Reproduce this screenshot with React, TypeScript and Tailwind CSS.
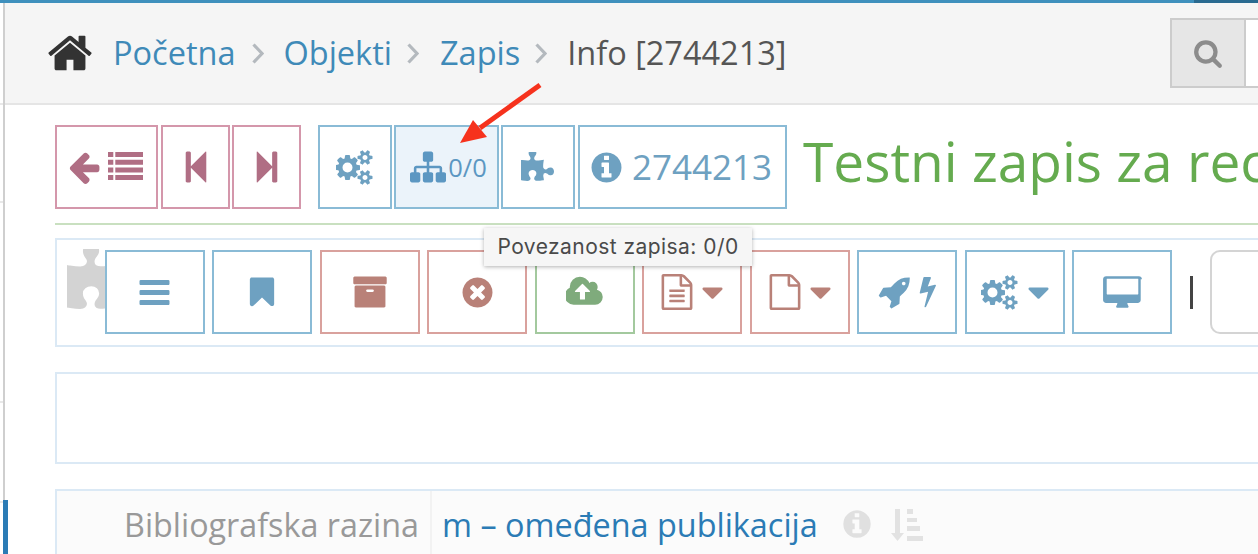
import React from "react";

const P = {
  home: "M1472 992v480q0 26-19 45t-45 19h-384v-384h-256v384h-384q-26 0-45-19t-19-45v-480q0-1 .5-3t.5-3l575-474 575 474q1 2 1 6zm223-69l-62 74q-8 9-21 11h-3q-13 0-21-7l-692-577-692 577q-12 8-24 7-13-2-21-11l-62-74q-8-10-7-23.5t11-21.5l719-599q32-26 76-26t76 26l244 204v-195q0-14 9-23t23-9h192q14 0 23 9t9 23v408l219 182q10 8 11 21.5t-7 23.5z",
  cogs: "M832 896q0-106-75-181t-181-75-181 75-75 181 75 181 181 75 181-75 75-181zm768 512q0-52-38-90t-90-38-90 38-38 90q0 53 37.5 90.5t90.5 37.5 90.5-37.5 37.5-90.5zm0-1024q0-52-38-90t-90-38-90 38-38 90q0 53 37.5 90.5t90.5 37.5 90.5-37.5 37.5-90.5zm-384 421v185q0 10-7 19.5t-16 10.5l-155 24q-11 35-32 76 34 48 90 115 7 11 7 20 0 12-7 19-23 30-82.5 89.5t-78.5 59.5q-11 0-21-7l-115-90q-37 19-77 31-11 108-23 155-7 24-30 24h-186q-11 0-20-7.5t-10-17.5l-23-153q-34-10-75-31l-118 89q-7 7-20 7-11 0-21-8-144-133-144-160 0-9 7-19 10-14 41-53t47-61q-23-44-35-82l-152-24q-10-1-17-9.5t-7-19.5v-185q0-10 7-19.5t16-10.5l155-24q11-35 32-76-34-48-90-115-7-11-7-20 0-12 7-20 22-30 82-89t79-59q11 0 21 7l115 90q34-18 77-32 11-108 23-154 7-24 30-24h186q11 0 20 7.5t10 17.5l23 153q34 10 75 31l118-89q8-7 20-7 11 0 21 8 144 133 144 160 0 8-7 19-12 16-42 54t-45 60q23 48 34 82l152 23q10 2 17 10.5t7 19.5zm640 533v140q0 16-149 31-12 27-30 52 51 113 51 138 0 4-4 7-122 71-124 71-8 0-46-47t-52-68q-20 2-30 2t-30-2q-14 21-52 68t-46 47q-2 0-124-71-4-3-4-7 0-25 51-138-18-25-30-52-149-15-149-31v-140q0-16 149-31 13-29 30-52-51-113-51-138 0-4 4-7 4-2 35-20t59-34 30-16q8 0 46 46.5t52 67.5q20-2 30-2t30 2q51-71 92-112l6-2q4 0 124 70 4 3 4 7 0 25-51 138 17 23 30 52 149 15 149 31zm0-1024v140q0 16-149 31-12 27-30 52 51 113 51 138 0 4-4 7-122 71-124 71-8 0-46-47t-52-68q-20 2-30 2t-30-2q-14 21-52 68t-46 47q-2 0-124-71-4-3-4-7 0-25 51-138-18-25-30-52-149-15-149-31v-140q0-16 149-31 13-29 30-52-51-113-51-138 0-4 4-7 4-2 35-20t59-34 30-16q8 0 46 46.5t52 67.5q20-2 30-2t30 2q51-71 92-112l6-2q4 0 124 70 4 3 4 7 0 25-51 138 17 23 30 52 149 15 149 31z",
  sitemap: "M1792 1248v320q0 40-28 68t-68 28h-320q-40 0-68-28t-28-68v-320q0-40 28-68t68-28h96v-192h-512v192h96q40 0 68 28t28 68v320q0 40-28 68t-68 28h-320q-40 0-68-28t-28-68v-320q0-40 28-68t68-28h96v-192h-512v192h96q40 0 68 28t28 68v320q0 40-28 68t-68 28h-320q-40 0-68-28t-28-68v-320q0-40 28-68t68-28h96v-192q0-52 38-90t90-38h512v-192h-96q-40 0-68-28t-28-68v-320q0-40 28-68t68-28h320q40 0 68 28t28 68v320q0 40-28 68t-68 28h-96v192h512q52 0 90 38t38 90v192h96q40 0 68 28t28 68z",
  puzzle: "M1664 1098q0 81-44.5 135t-123.5 54q-41 0-77.5-17.5t-59-38-56.5-38-71-17.5q-110 0-110 124 0 39 16 115t15 115v5q-22 0-33 1-34 3-97.5 11.5t-115.5 13.5-98 5q-61 0-103-26.5t-42-83.5q0-37 17.5-71t38-56.5 38-59 17.5-77.5q0-79-54-123.5t-135-44.5q-84 0-143 45.5t-59 127.5q0 43 15 83t33.5 64.5 33.5 53 15 50.5q0 45-46 89-37 35-117 35-95 0-245-24-9-2-27.5-4t-27.5-4l-13-2q-1 0-3-1-2 0-2-1v-1024q2 1 17.5 3.5t34 5 21.5 3.5q150 24 245 24 80 0 117-35 46-44 46-89 0-22-15-50.5t-33.5-53-33.5-64.5-15-83q0-82 59-127.5t144-45.5q80 0 134 44.5t54 123.5q0 41-17.5 77.5t-38 59-38 56.5-17.5 71q0 57 42 83.5t103 26.5q64 0 180-15t163-17v2q-1 2-3.5 17.5t-5 34-3.5 21.5q-24 150-24 245 0 80 35 117 44 46 89 46 22 0 50.5-15t53-33.5 64.5-33.5 83-15q82 0 127.5 59t45.5 143z",
  rocket: "M1504 448q0-40-28-68t-68-28-68 28-28 68 28 68 68 28 68-28 28-68zm224-288q0 249-75.5 430.5t-253.5 360.5q-81 80-195 176l-20 379q-2 16-16 26l-384 224q-7 4-16 4-12 0-23-9l-64-64q-13-14-8-32l85-276-281-281-276 85q-3 1-9 1-14 0-23-9l-64-64q-17-19-5-39l224-384q10-14 26-16l379-20q96-114 176-195 188-187 358-258t431-71q14 0 24 9.5t10 22.5z",
  bolt: "M1333 566q18 20 7 44l-540 1157q-13 25-42 25-4 0-14-2-17-5-25.5-19t-4.5-30l197-808-406 101q-4 1-12 1-18 0-31-11-18-15-13-39l201-825q4-14 16-23t28-9h328q19 0 32 12.5t13 29.5q0 8-5 18l-171 463 396-98q8-2 12-2 19 0 34 15z",
  info: "M1152 1376v-160q0-14-9-23t-23-9h-96v-512q0-14-9-23t-23-9h-320q-14 0-23 9t-9 23v160q0 14 9 23t23 9h96v320h-96q-14 0-23 9t-9 23v160q0 14 9 23t23 9h448q14 0 23-9t9-23zm-128-896v-160q0-14-9-23t-23-9h-192q-14 0-23 9t-9 23v160q0 14 9 23t23 9h192q14 0 23-9t9-23zm640 416q0 209-103 385.5t-279.5 279.5-385.5 103-385.5-103-279.5-279.5-103-385.5 103-385.5 279.5-279.5 385.5-103 385.5 103 279.5 279.5 103 385.5z",
  times: "M1277 1122q0-26-19-45l-181-181 181-181q19-19 19-45 0-27-19-46l-90-90q-19-19-46-19-26 0-45 19l-181 181-181-181q-19-19-45-19-27 0-46 19l-90 90q-19 19-19 46 0 26 19 45l181 181-181 181q-19 19-19 45 0 27 19 46l90 90q19 19 46 19 26 0 45-19l181-181 181 181q19 19 45 19 27 0 46-19l90-90q19-19 19-46zm387-226q0 209-103 385.5t-279.5 279.5-385.5 103-385.5-103-279.5-279.5-103-385.5 103-385.5 279.5-279.5 385.5-103 385.5 103 279.5 279.5 103 385.5z",
  cloud: "M1216 864q0-14-9-23l-352-352q-9-9-23-9t-23 9l-351 351q-10 12-10 24 0 14 9 23t23 9h224v352q0 13 9.5 22.5t22.5 9.5h192q13 0 22.5-9.5t9.5-22.5v-352h224q13 0 22.5-9.5t9.5-22.5zm640 288q0 159-112.5 271.5t-271.5 112.5h-1088q-185 0-316.5-131.5t-131.5-316.5q0-130 70-240t188-165q-2-30-2-43 0-212 150-362t362-150q156 0 285.5 87t188.5 231q71-62 166-62 106 0 181 75t75 181q0 76-41 138 130 31 213.5 135.5t83.5 238.5z",
  fileText: "M1596 380q28 28 48 76t20 88v1152q0 40-28 68t-68 28h-1344q-40 0-68-28t-28-68v-1600q0-40 28-68t68-28h896q40 0 88 20t76 48zm-444-244v376h376q-10-29-22-41l-313-313q-12-12-41-22zm384 1528v-1024h-416q-40 0-68-28t-28-68v-416h-768v1536h1280zm-1024-864q0-14 9-23t23-9h704q14 0 23 9t9 23v64q0 14-9 23t-23 9h-704q-14 0-23-9t-9-23v-64zm736 224q14 0 23 9t9 23v64q0 14-9 23t-23 9h-704q-14 0-23-9t-9-23v-64q0-14 9-23t23-9h704zm0 256q14 0 23 9t9 23v64q0 14-9 23t-23 9h-704q-14 0-23-9t-9-23v-64q0-14 9-23t23-9h704z",
  file: "M1596 380q28 28 48 76t20 88v1152q0 40-28 68t-68 28h-1344q-40 0-68-28t-28-68v-1600q0-40 28-68t68-28h896q40 0 88 20t76 48zm-444-244v376h376q-10-29-22-41l-313-313q-12-12-41-22zm384 1528v-1024h-416q-40 0-68-28t-28-68v-416h-768v1536h1280z",
  bookmark: "M1420 128q23 0 44 9 33 13 52.5 41t19.5 62v1289q0 34-19.5 62t-52.5 41q-19 8-44 8-48 0-83-32l-441-424-441 424q-36 33-83 33-23 0-44-9-33-13-52.5-41t-19.5-62v-1289q0-34 19.5-62t52.5-41q21-9 44-9h1048z",
  bars: "M1664 1344v128q0 26-19 45t-45 19h-1408q-26 0-45-19t-19-45v-128q0-26 19-45t45-19h1408q26 0 45 19t19 45zm0-512v128q0 26-19 45t-45 19h-1408q-26 0-45-19t-19-45v-128q0-26 19-45t45-19h1408q26 0 45 19t19 45zm0-512v128q0 26-19 45t-45 19h-1408q-26 0-45-19t-19-45v-128q0-26 19-45t45-19h1408q26 0 45 19t19 45z",
  archive: "M1088 832q0-26-19-45t-45-19h-256q-26 0-45 19t-19 45 19 45 45 19h256q26 0 45-19t19-45zm576-192v960q0 26-19 45t-45 19h-1408q-26 0-45-19t-19-45v-960q0-26 19-45t45-19h1408q26 0 45 19t19 45zm64-448v256q0 26-19 45t-45 19h-1536q-26 0-45-19t-19-45v-256q0-26 19-45t45-19h1536q26 0 45 19t19 45z",
  caret: "M1408 704q0 26-19 45l-448 448q-19 19-45 19t-45-19l-448-448q-19-19-19-45t19-45 45-19h896q26 0 45 19t19 45z",
  arrowLeft: "M1664 896v128q0 53-32.5 90.5t-84.5 37.5h-704l293 294q38 36 38 90t-38 90l-75 76q-37 37-90 37-52 0-91-37l-651-652q-37-37-37-90 0-52 37-91l651-650q38-38 91-38 52 0 90 38l75 74q38 38 38 91t-38 91l-293 293h704q52 0 84.5 37.5t32.5 90.5z",
  stepBack: "M1363 141q19-19 32-13t13 32v1472q0 26-13 32t-32-13l-710-710q-9-9-13-19v678q0 26-19 45t-45 19h-128q-26 0-45-19t-19-45v-1408q0-26 19-45t45-19h128q26 0 45 19t19 45v678q4-10 13-19z",
  stepFwd: "M429 1651q-19 19-32 13t-13-32v-1472q0-26 13-32t32 13l710 710q9 9 13 19v-678q0-26 19-45t45-19h128q26 0 45 19t19 45v1408q0 26-19 45t-45 19h-128q-26 0-45-19t-19-45v-678q-4 10-13 19z",
  search: "M1216 832q0-185-131.5-316.5t-316.5-131.5-316.5 131.5-131.5 316.5 131.5 316.5 316.5 131.5 316.5-131.5 131.5-316.5zm512 832q0 52-38 90t-90 38q-54 0-90-38l-343-342q-179 124-399 124-143 0-273.5-55.5t-225-150-150-225-55.5-273.5 55.5-273.5 150-225 225-150 273.5-55.5 273.5 55.5 225 150 150 225 55.5 273.5q0 220-124 399l343 343q37 37 37 90z",
  desktop: "M1856 992V224q0-13-9.5-22.5T1824 192H224q-13 0-22.5 9.5T192 224v768q0 13 9.5 22.5T224 1024h1600q13 0 22.5-9.5t9.5-22.5zm128-768v1088q0 66-47 113t-113 47h-544q0 37 16 77.5t32 71 16 43.5q0 26-19 45t-45 19H752q-26 0-45-19t-19-45q0-14 16-44t32-70 16-78H160q-66 0-113-47t-47-113V224q0-66 47-113t113-47h1728q66 0 113 47t47 113z",
};

function Icon({ d, className, box = "0 0 1792 1792" }: { d: string; className: string; box?: string }) {
  return (
    <svg viewBox={box} className={className} fill="currentColor" aria-hidden="true">
      <path d={d} />
    </svg>
  );
}

function Btn({ className, children }: { className: string; children: React.ReactNode }) {
  return (
    <div className={`flex shrink-0 items-center justify-center border-2 bg-white ${className}`}>{children}</div>
  );
}

const pink = "h-[84px] border-[#d497ab] text-[#b06e84]";
const blueTop = "h-[84px] border-[#8abbd6] text-[#6ea1c1]";
const blue = "h-[84px] w-[100px] border-[#8abbd6] text-[#6ea1c1]";
const red = "h-[84px] w-[100px] border-[#d9a19d] text-[#b98178]";
const green = "h-[84px] w-[100px] border-[#a3c99e] text-[#7fab7c]";

function Chevron({ className }: { className: string }) {
  return (
    <svg viewBox="0 0 12 21" className={`h-[21px] w-[12px] text-[#b4b9be] ${className}`} fill="none" stroke="currentColor" strokeWidth="3.2" aria-hidden="true">
      <path d="M1.500 1.500L10 10.500L1.500 19.500" />
    </svg>
  );
}

export default function App() {
  return (
    <div className="relative flex h-[554px] w-[1258px] overflow-hidden bg-white font-['Open_Sans','Noto_Sans',sans-serif]">
      {/* left rail */}
      <div className="flex w-[5px] shrink-0 pt-[3px]">
        <div className="w-[3px] shrink-0">
          <div className="h-[102px] border-b-2 border-[#e8e8e8]" />
          <div className="h-[98px] border-b-2 border-[#e8e8e8]" />
          <div className="h-[200px] border-b-2 border-[#e8e8e8]" />
          <div className="h-[100px] border-b-2 border-[#e8e8e8]" />
        </div>
        <div className="w-[2px] shrink-0">
          <div className="h-[497px] bg-[#cfcfcf]" />
          <div className="h-[54px] w-[5px] bg-[#2b7bb5]" />
        </div>
      </div>

      <div className="min-w-0 flex-1">
        {/* top strip */}
        <div className="-ml-[5px] flex h-[3px]">
          <div className="h-[3px] w-[1194px] bg-[#3f90bd]" />
          <div className="h-[3px] flex-1 bg-[#2a6a90]" />
        </div>

        {/* breadcrumb */}
        <div className="flex h-[102px] items-center border-b-2 border-[#e5e5e5] bg-[#f5f5f5] pl-[41px]">
          <Icon d={P.home} className="h-[48px] w-[48px] text-[#333333]" />
          <div className="ml-[19px] flex items-center text-[32.500px] leading-none">
            <span className="text-[#3f8ab8]">Početna</span>
            <Chevron className="ml-[16px] mr-[20px]" />
            <span className="text-[#3f8ab8]">Objekti</span>
            <Chevron className="ml-[15px] mr-[21px]" />
            <span className="text-[#3f8ab8]">Zapis</span>
            <Chevron className="ml-[15px] mr-[20px]" />
            <span className="text-[#555555]">Info [2744213]</span>
          </div>
          <div className="ml-auto flex h-[70px]">
            <div className="flex w-[76px] items-center justify-center border-2 border-[#cccccc] bg-[#e6e6e6] text-[#8c8c8c]">
              <Icon d={P.search} className="h-[30px] w-[30px]" />
            </div>
            <div className="w-[12px] border-y-2 border-[#cccccc] bg-white" />
          </div>
        </div>

        {/* content */}
        <div className="pl-[50px]">
          {/* record toolbar */}
          <div className="mt-[20px] flex h-[84px] items-center whitespace-nowrap">
            <Btn className={`w-[103px] gap-[6px] pr-[4px] ${pink}`}>
              <Icon d={P.arrowLeft} className="h-[36px] w-[36px]" />
              <svg viewBox="0 0 35 28" className="mb-[2px] h-[28px] w-[35px]" fill="currentColor" aria-hidden="true">
                <path d="M0 0h5.300v5H0zM7.300 0H35v5H7.300zM0 7.700h5.300v5H0zM7.300 7.700H35v5H7.300zM0 15.400h5.300v5H0zM7.300 15.400H35v5H7.300zM0 23h5.300v5H0zM7.300 23H35v5H7.300z" />
              </svg>
            </Btn>
            <Btn className={`ml-[3px] w-[69px] ${pink}`}>
              <Icon d={P.stepBack} className="h-[36px] w-[36px]" />
            </Btn>
            <Btn className={`ml-[2px] w-[69px] ${pink}`}>
              <Icon d={P.stepFwd} className="h-[36px] w-[36px]" />
            </Btn>
            <Btn className={`ml-[17px] w-[74px] ${blueTop}`}>
              <Icon d={P.cogs} box="0 0 1920 1792" className="h-[35px] w-[38px]" />
            </Btn>
            <Btn className={`ml-[2px] w-[105px] !bg-[#ebf3fa] pl-[4px] ${blueTop}`}>
              <Icon d={P.sitemap} className="h-[36px] w-[36px] text-[#5c97c2]" />
              <span className="ml-[2px] text-[25.500px] text-[#5c97c2]">0/0</span>
            </Btn>
            <Btn className={`ml-[2px] w-[74px] pr-[2px] ${blueTop}`}>
              <Icon d={P.puzzle} box="0 128 1664 1536" className="h-[31px] w-[33px]" />
            </Btn>
            <Btn className={`ml-[3px] w-[209px] gap-[8px] pr-[4px] ${blueTop}`}>
              <Icon d={P.info} className="h-[35px] w-[35px]" />
              <span className="text-[35px]">2744213</span>
            </Btn>
            <h1 className="ml-[16px] pb-[14px] text-[55px] font-normal leading-none text-[#65ab4f]">Testni zapis za recenziju</h1>
          </div>

          <div className="mt-[14px] h-[2px] bg-[#c9e0c0]" />

          {/* actions */}
          <div className="relative mt-[13px] flex h-[109px] items-center border-y-2 border-l-2 border-[#dbe9f5] pb-[1px] pl-[48px] whitespace-nowrap">
            <Icon d={P.puzzle} box="0 128 1664 1536" className="absolute left-[10px] top-[9px] h-[64px] w-[69px] text-[#d3d3d3]" />
            <Btn className={`relative ${blue}`}>
              <Icon d={P.bars} className="mr-[2px] h-[35px] w-[35px]" />
            </Btn>
            <Btn className={`relative ml-[7px] ${blue}`}>
              <Icon d={P.bookmark} className="h-[34px] w-[34px]" />
            </Btn>
            <Btn className={`ml-[8px] ${red}`}>
              <Icon d={P.archive} className="h-[36px] w-[36px]" />
            </Btn>
            <Btn className={`ml-[7px] ${red}`}>
              <Icon d={P.times} className="h-[35px] w-[35px]" />
            </Btn>
            <Btn className={`ml-[8px] ${green}`}>
              <Icon d={P.cloud} box="0 0 1920 1792" className="h-[36px] w-[38px]" />
            </Btn>
            <Btn className={`ml-[7px] gap-[9px] ${red}`}>
              <Icon d={P.fileText} className="-mx-[2px] h-[36px] w-[36px]" />
              <Icon d={P.caret} className="-mx-[7px] h-[35px] w-[35px]" />
            </Btn>
            <Btn className={`ml-[8px] gap-[9px] ${red}`}>
              <Icon d={P.file} className="-mx-[2px] h-[36px] w-[36px]" />
              <Icon d={P.caret} className="-mx-[7px] h-[35px] w-[35px]" />
            </Btn>
            <Btn className={`ml-[7px] gap-[6px] ${blue}`}>
              <Icon d={P.rocket} className="h-[34px] w-[34px]" />
              <Icon d={P.bolt} box="300 100 1100 1700" className="h-[34px] w-[20px]" />
            </Btn>
            <Btn className={`ml-[8px] gap-[9px] ${blue}`}>
              <Icon d={P.cogs} box="0 0 1920 1792" className="h-[35px] w-[38px]" />
              <Icon d={P.caret} className="-mx-[7px] h-[35px] w-[35px]" />
            </Btn>
            <Btn className={`ml-[7px] ${blue}`}>
              <Icon d={P.desktop} box="0 0 2048 1792" className="h-[34px] w-[39px]" />
            </Btn>
            <span className="ml-[18px] h-[33px] w-[3px] shrink-0 bg-[#444444]" />
            <div className="ml-[17px] h-[84px] w-[60px] shrink-0 rounded-l-[10px] border-y-2 border-l-2 border-[#d4d4d4]" />
          </div>

          {/* empty panel */}
          <div className="mt-[25px] h-[92px] border-y-2 border-l-2 border-[#dbe9f5]" />

          {/* field row */}
          <div className="mt-[25px] flex h-[70px] border-t-2 border-l-2 border-[#dbe9f5] bg-[#fbfbfb]">
            <div className="w-[375px] border-r-2 border-[#f2f2f2] pr-[11px] pt-[17px] text-right text-[32.300px] leading-none text-[#999999]">
              Bibliografska razina
            </div>
            <div className="flex h-[66px] items-start pl-[10px] pt-[17px]">
              <span className="text-[32.400px] leading-none text-[#2b7bb5]">m – omeđena publikacija</span>
              <Icon d={P.info} className="ml-[23px] h-[32px] w-[32px] text-[#e0e0e0]" />
              <svg viewBox="0 0 32 34" className="ml-[18px] h-[34px] w-[32px] text-[#e2e2e2]" fill="currentColor" aria-hidden="true">
                <path d="M4 1h5v24h4l-6.500 8L0 25h4zM16 1h6v5h-6zM16 10h10v4H16zM16 18h13v5H16zM16 28h16v5H16z" />
              </svg>
            </div>
          </div>
        </div>
      </div>

      {/* tooltip */}
      <div className="absolute left-[484px] top-[228px] flex h-[38px] w-[268px] items-center justify-center bg-[#f6f6f6] text-[21px] tracking-[0.45px] text-[#4a4a4a] shadow-[0_1px_4px_rgba(0,0,0,0.3)] font-['Inter',sans-serif]">
        Povezanost zapisa: 0/0
      </div>

      {/* annotation arrow */}
      <svg className="absolute left-[450px] top-[75px] h-[80px] w-[100px]" viewBox="0 0 100 80" aria-hidden="true">
        <path d="M90 10L30 53" stroke="#f6321d" strokeWidth="5" strokeLinecap="butt" />
        <path d="M10 68L23 45L37 62z" fill="#f6321d" />
      </svg>
    </div>
  );
}
